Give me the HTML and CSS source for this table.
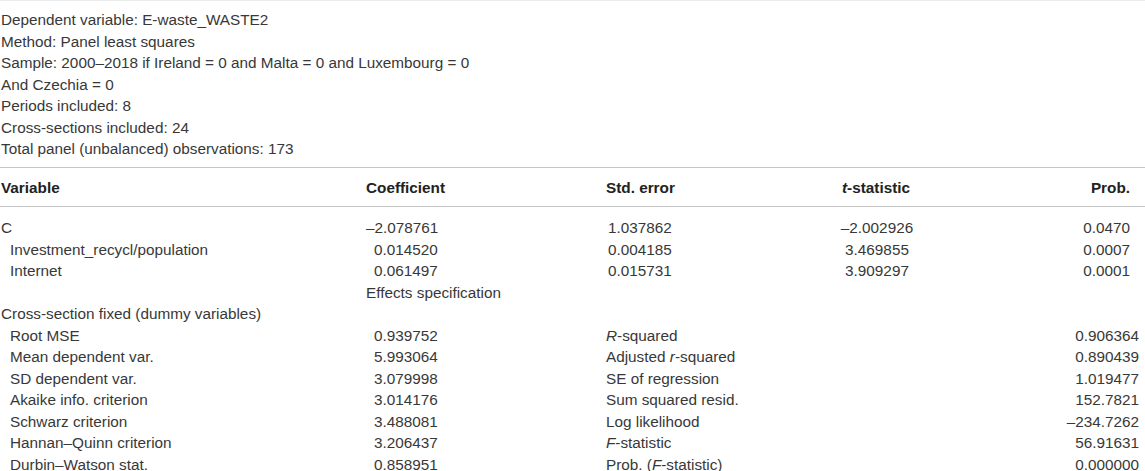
FILE: index.html
```html
<!DOCTYPE html>
<html lang="en">
<head>
<meta charset="utf-8">
<title>Regression table</title>
<link rel="stylesheet" href="styles.css">
</head>
<body>
<div class="wrap">
  <div class="caption">
    <div>Dependent variable: E-waste_WASTE2</div>
    <div>Method: Panel least squares</div>
    <div>Sample: 2000–2018 if Ireland = 0 and Malta = 0 and Luxembourg = 0</div>
    <div>And Czechia = 0</div>
    <div>Periods included: 8</div>
    <div>Cross-sections included: 24</div>
    <div>Total panel (unbalanced) observations: 173</div>
  </div>
  <table class="tbl">
    <colgroup>
      <col class="c1"><col class="c2"><col class="c3"><col class="c4"><col class="c5">
    </colgroup>
    <thead>
      <tr>
        <th class="l">Variable</th>
        <th class="l">Coefficient</th>
        <th class="l">Std. error</th>
        <th class="c"><i>t</i>-statistic</th>
        <th class="r">Prob.</th>
      </tr>
    </thead>
    <tbody>
      <tr><td>C</td><td class="num"><span class="neg">–2.078761</span></td><td class="se">1.037862</td><td class="c">–2.002926</td><td class="r">0.0470</td></tr>
      <tr><td class="ind">Investment_recycl/population</td><td class="num">0.014520</td><td class="se">0.004185</td><td class="c">3.469855</td><td class="r">0.0007</td></tr>
      <tr><td class="ind">Internet</td><td class="num">0.061497</td><td class="se">0.015731</td><td class="c">3.909297</td><td class="r">0.0001</td></tr>
      <tr><td></td><td colspan="4">Effects specification</td></tr>
      <tr><td colspan="5">Cross-section fixed (dummy variables)</td></tr>
      <tr><td class="ind">Root MSE</td><td class="num">0.939752</td><td colspan="2" class="lab"><i>R</i>-squared</td><td class="rs">0.906364</td></tr>
      <tr><td class="ind">Mean dependent var.</td><td class="num">5.993064</td><td colspan="2" class="lab">Adjusted <i>r</i>-squared</td><td class="rs">0.890439</td></tr>
      <tr><td class="ind">SD dependent var.</td><td class="num">3.079998</td><td colspan="2" class="lab">SE of regression</td><td class="rs">1.019477</td></tr>
      <tr><td class="ind">Akaike info. criterion</td><td class="num">3.014176</td><td colspan="2" class="lab">Sum squared resid.</td><td class="rs">152.7821</td></tr>
      <tr><td class="ind">Schwarz criterion</td><td class="num">3.488081</td><td colspan="2" class="lab">Log likelihood</td><td class="rs">–234.7262</td></tr>
      <tr><td class="ind">Hannan–Quinn criterion</td><td class="num">3.206437</td><td colspan="2" class="lab"><i>F</i>-statistic</td><td class="rs">56.91631</td></tr>
      <tr><td class="ind">Durbin–Watson stat.</td><td class="num">0.858951</td><td colspan="2" class="lab">Prob. (<i>F</i>-statistic)</td><td class="rs">0.000000</td></tr>
    </tbody>
  </table>
</div>
</body>
</html>
```

FILE: styles.css
```css
html, body {
  margin: 0;
  padding: 0;
  background: #ffffff;
}
.wrap {
  width: 1145px;
  font-family: "Liberation Sans", Arial, Helvetica, sans-serif;
  font-size: 15.3px;
  line-height: 21.5px;
  color: #383838;
  border-top: 1px solid #ececec;
}
.caption {
  padding: 8px 0 0 1px;
  margin-bottom: 7px;
}
.tbl {
  width: 1145px;
  table-layout: fixed;
  border-collapse: collapse;
}
.c1 { width: 366px; }
.c2 { width: 240px; }
.c3 { width: 184px; }
.c4 { width: 172px; }
.c5 { width: 183px; }
.tbl th, .tbl td {
  padding: 0;
  white-space: nowrap;
  font-weight: normal;
  vertical-align: middle;
}
.tbl thead tr {
  border-top: 1px solid #c4c4c4;
  border-bottom: 1px solid #c4c4c4;
}
.tbl th {
  font-weight: bold;
  color: #222222;
  padding-top: 9px;
  padding-bottom: 8px;
}
.tbl th:first-child { padding-left: 1px; }
.tbl th.l { text-align: left; }
.tbl th.r, .tbl td.r { text-align: right; padding-right: 15px; }
.tbl .c { text-align: center; }
.tbl th.c { padding-left: 0; }
.tbl td.c { padding-left: 2px; }
.tbl tbody tr:first-child td { padding-top: 10px; }
.tbl td:first-child { padding-left: 1px; }
.tbl td.ind { padding-left: 10px; }
.tbl td.num { padding-left: 8px; }
.neg { margin-left: -8px; }
.tbl td.se { padding-left: 2px; }
.tbl td.lab { padding-left: 0; }
.tbl td.rs { text-align: right; padding-right: 6px; }
```
